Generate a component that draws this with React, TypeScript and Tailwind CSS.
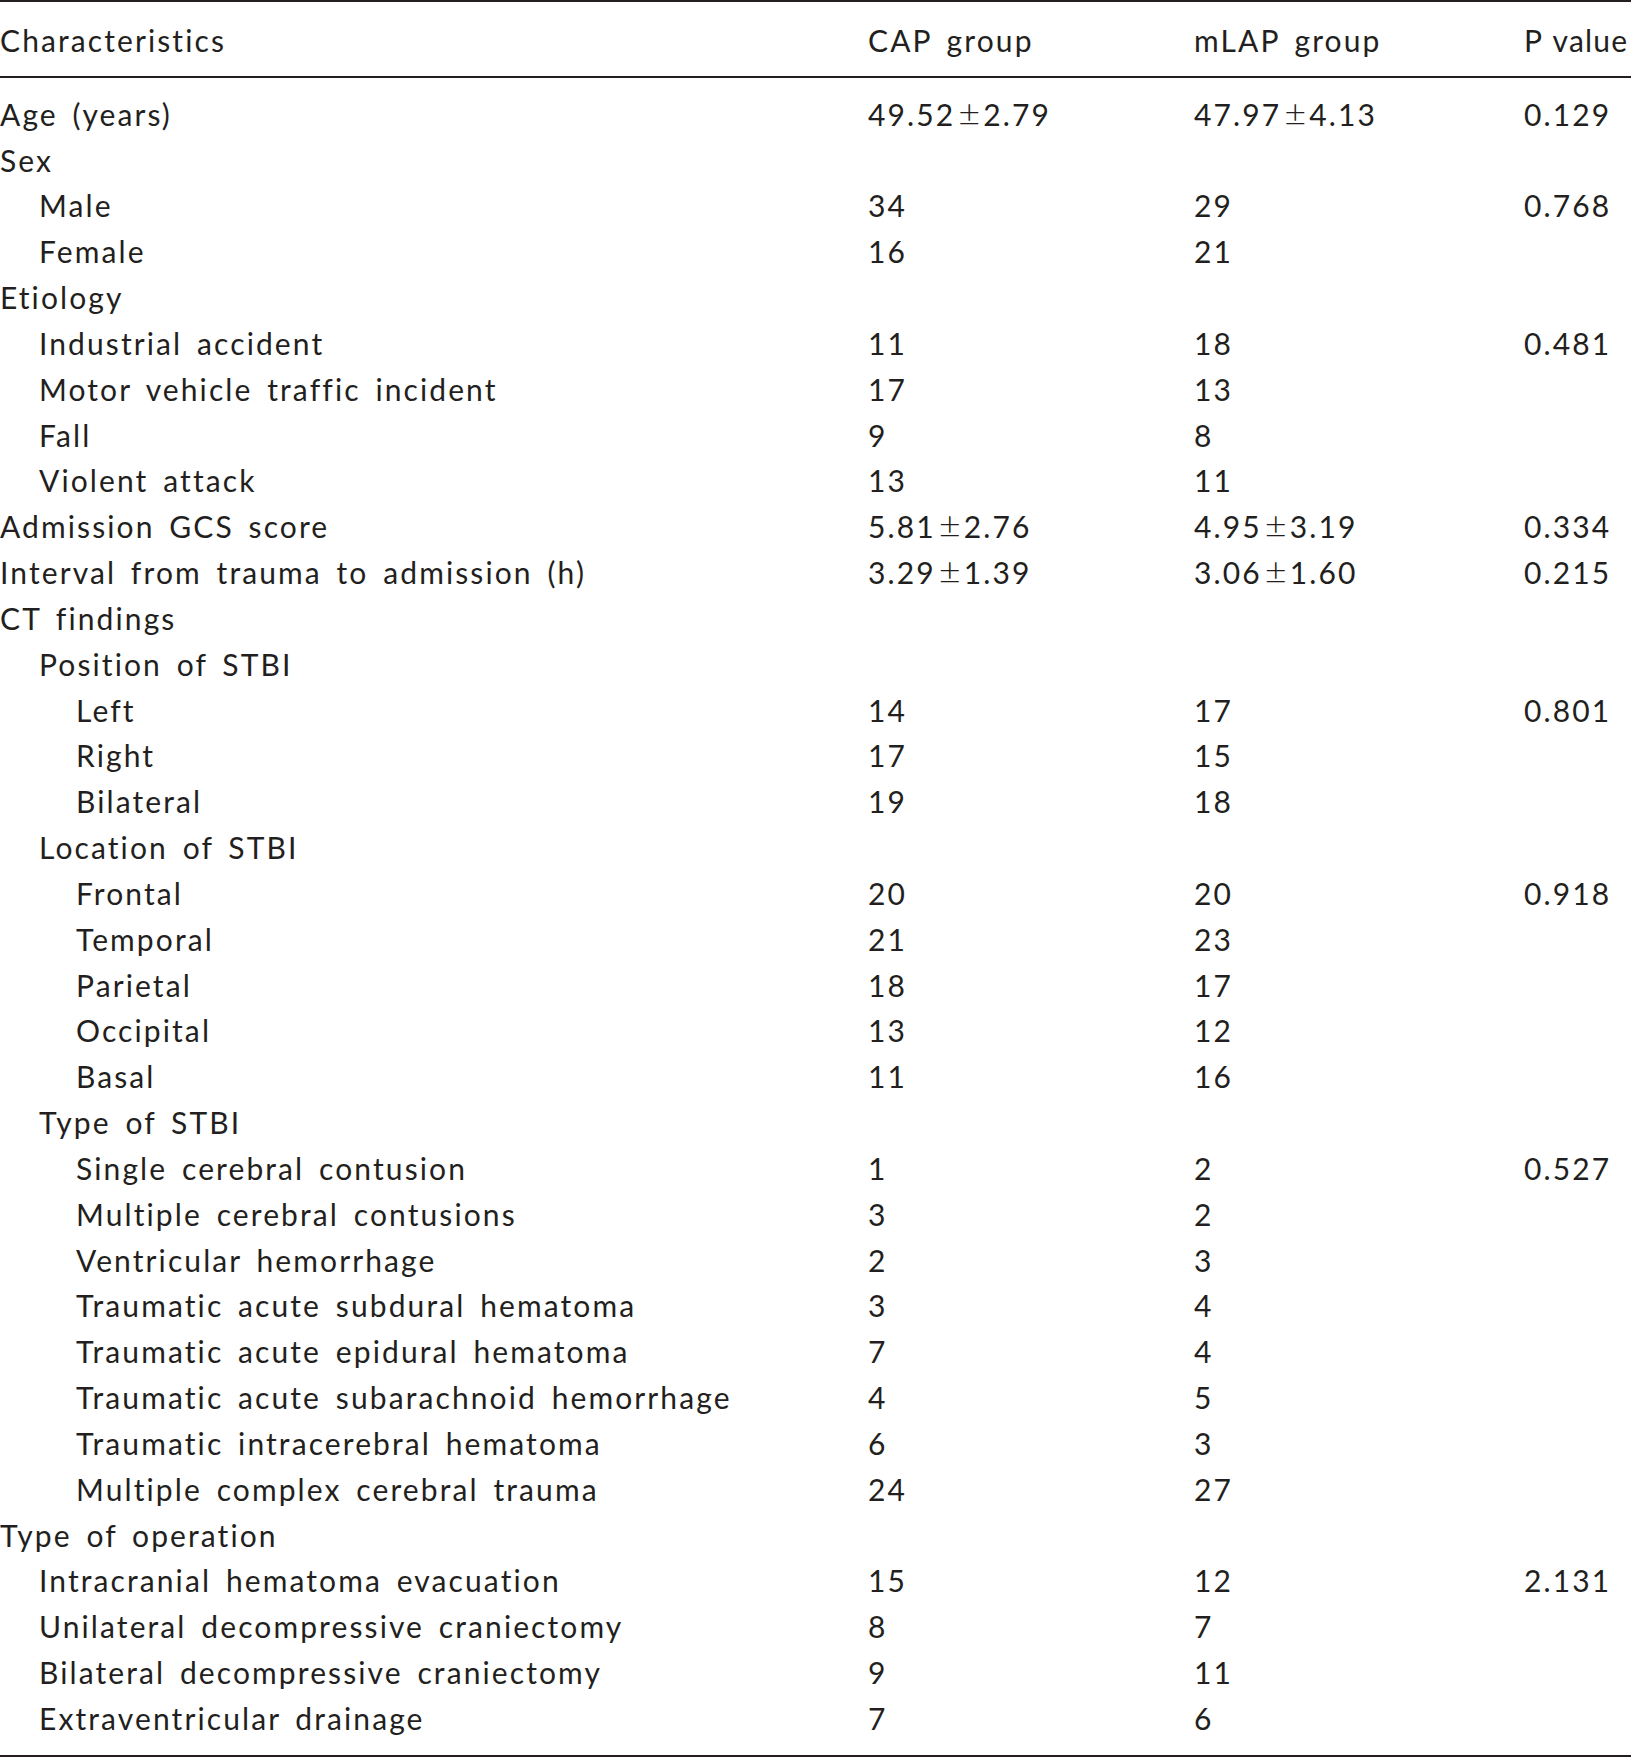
const rows: { label: string; level: number; cap?: string; mlap?: string; p?: string }[] = [
  { label: "Age (years)", level: 0, cap: "49.52|2.79", mlap: "47.97|4.13", p: "0.129" },
  { label: "Sex", level: 0 },
  { label: "Male", level: 1, cap: "34", mlap: "29", p: "0.768" },
  { label: "Female", level: 1, cap: "16", mlap: "21" },
  { label: "Etiology", level: 0 },
  { label: "Industrial accident", level: 1, cap: "11", mlap: "18", p: "0.481" },
  { label: "Motor vehicle traffic incident", level: 1, cap: "17", mlap: "13" },
  { label: "Fall", level: 1, cap: "9", mlap: "8" },
  { label: "Violent attack", level: 1, cap: "13", mlap: "11" },
  { label: "Admission GCS score", level: 0, cap: "5.81|2.76", mlap: "4.95|3.19", p: "0.334" },
  { label: "Interval from trauma to admission (h)", level: 0, cap: "3.29|1.39", mlap: "3.06|1.60", p: "0.215" },
  { label: "CT findings", level: 0 },
  { label: "Position of STBI", level: 1 },
  { label: "Left", level: 2, cap: "14", mlap: "17", p: "0.801" },
  { label: "Right", level: 2, cap: "17", mlap: "15" },
  { label: "Bilateral", level: 2, cap: "19", mlap: "18" },
  { label: "Location of STBI", level: 1 },
  { label: "Frontal", level: 2, cap: "20", mlap: "20", p: "0.918" },
  { label: "Temporal", level: 2, cap: "21", mlap: "23" },
  { label: "Parietal", level: 2, cap: "18", mlap: "17" },
  { label: "Occipital", level: 2, cap: "13", mlap: "12" },
  { label: "Basal", level: 2, cap: "11", mlap: "16" },
  { label: "Type of STBI", level: 1 },
  { label: "Single cerebral contusion", level: 2, cap: "1", mlap: "2", p: "0.527" },
  { label: "Multiple cerebral contusions", level: 2, cap: "3", mlap: "2" },
  { label: "Ventricular hemorrhage", level: 2, cap: "2", mlap: "3" },
  { label: "Traumatic acute subdural hematoma", level: 2, cap: "3", mlap: "4" },
  { label: "Traumatic acute epidural hematoma", level: 2, cap: "7", mlap: "4" },
  { label: "Traumatic acute subarachnoid hemorrhage", level: 2, cap: "4", mlap: "5" },
  { label: "Traumatic intracerebral hematoma", level: 2, cap: "6", mlap: "3" },
  { label: "Multiple complex cerebral trauma", level: 2, cap: "24", mlap: "27" },
  { label: "Type of operation", level: 0 },
  { label: "Intracranial hematoma evacuation", level: 1, cap: "15", mlap: "12", p: "2.131" },
  { label: "Unilateral decompressive craniectomy", level: 1, cap: "8", mlap: "7" },
  { label: "Bilateral decompressive craniectomy", level: 1, cap: "9", mlap: "11" },
  { label: "Extraventricular drainage", level: 1, cap: "7", mlap: "6" },
];

const indent = ["pl-0", "pl-[39px]", "pl-[76px]"];

function Value({ v }: { v?: string }) {
  if (!v) return null;
  const [a, b] = v.split("|");
  if (b === undefined) return <>{a}</>;
  return (
    <>
      {a}
      <span className="mx-[3px] text-[38px] leading-[0] font-light tracking-normal">±</span>
      {b}
    </>
  );
}

export default function App() {
  return (
    <div
      className="w-[1631px] h-[1759px] bg-white text-[#231f20] text-[30px] leading-[45.83px] tracking-[2.1px] [word-spacing:5px] overflow-hidden [font-variant-ligatures:none]"
      style={{ fontFamily: "Lato, 'Open Sans', sans-serif" }}
    >
      <div className="border-t-2 border-[#231f20] pt-[16px] pb-[12px] border-b-2">
        <div className="grid grid-cols-[868px_326px_330px_1fr] whitespace-nowrap">
          <div>Characteristics</div>
          <div>CAP group</div>
          <div>mLAP group</div>
          <div className="tracking-[1.2px] [word-spacing:2px]">P value</div>
        </div>
      </div>
      <div className="pt-[14px] pb-[13px] border-b-2 border-[#231f20]">
        {rows.map((r, i) => (
          <div key={i} className="grid grid-cols-[868px_326px_330px_1fr] whitespace-nowrap">
            <div className={indent[r.level]}>{r.label}</div>
            <div><Value v={r.cap} /></div>
            <div><Value v={r.mlap} /></div>
            <div>{r.p}</div>
          </div>
        ))}
      </div>
    </div>
  );
}
